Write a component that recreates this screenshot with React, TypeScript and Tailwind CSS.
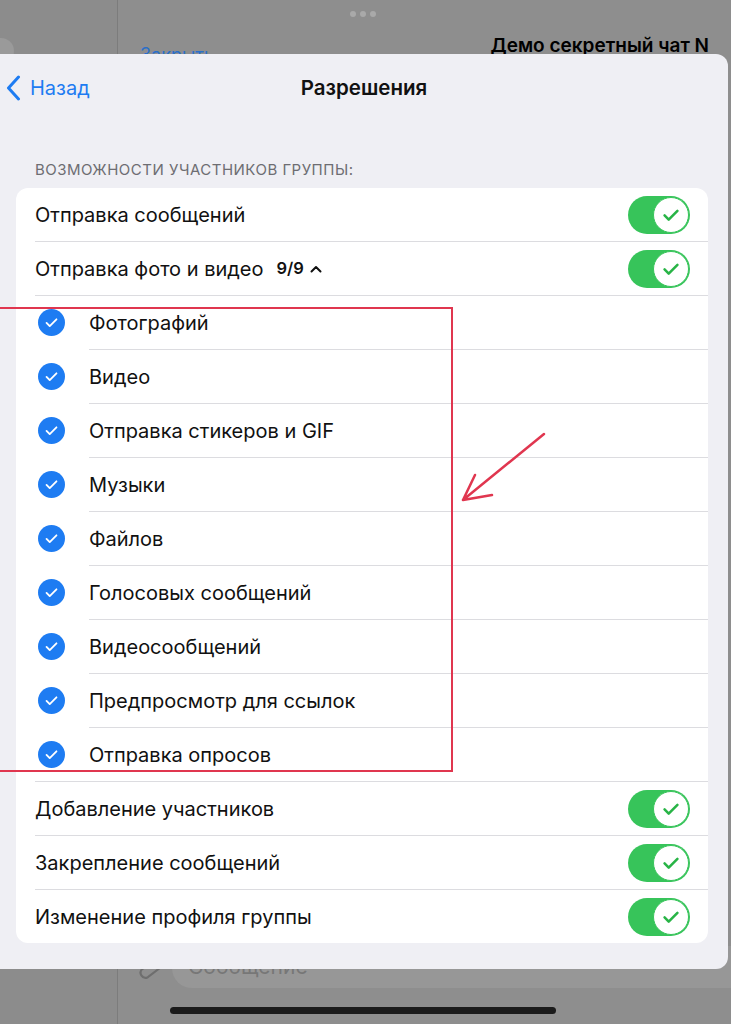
import React from "react";

const font = { fontFamily: "Inter, 'Noto Sans', sans-serif" };

const Check = ({ color, size, width }: { color: string; size: number; width: number }) => (
  <svg width={size} height={size} viewBox="0 0 24 24" fill="none">
    <path d="M5 12.5l4.5 4.5L19 7.5" stroke={color} strokeWidth={width} strokeLinecap="round" strokeLinejoin="round" />
  </svg>
);

const Toggle = () => (
  <div className="w-[62px] h-[38px] rounded-full bg-[#37c45a] flex items-center justify-end pr-[1px] shrink-0">
    <div className="w-[36px] h-[36px] rounded-full bg-white border-[1.5px] border-[#37c45a] flex items-center justify-center">
      <Check color="#28b446" size={22} width={2.8} />
    </div>
  </div>
);

const Sep = ({ inset }: { inset: number }) => (
  <div className={inset === 89 ? "ml-[73px] h-px bg-[#dcdce0]" : "ml-[19px] h-px bg-[#dcdce0]"} />
);

const MainRow = ({ label, extra }: { label: string; extra?: boolean }) => (
  <div className="h-[53px] flex items-center pl-[19px] pr-[18px]">
    <div className="flex-1 flex items-center text-[20px] text-[#111]">
      <span>{label}</span>
      {extra && (
        <span className="ml-[13px] flex items-center text-[16.5px] font-semibold text-[#111]">
          9/9
          <svg width="12" height="10" viewBox="0 0 12 10" className="ml-[6px]" fill="none">
            <path d="M1.5 7.5L6 3l4.5 4.5" stroke="#111" strokeWidth="2" strokeLinecap="round" strokeLinejoin="round" />
          </svg>
        </span>
      )}
    </div>
    <Toggle />
  </div>
);

const SubRow = ({ label }: { label: string }) => (
  <div className="h-[53px] flex items-center pl-[22px]">
    <div className="w-[27px] h-[27px] rounded-full bg-[#1e7cf2] flex items-center justify-center">
      <Check color="#fff" size={17} width={2.6} />
    </div>
    <span className="ml-[24px] text-[20px] text-[#111]">{label}</span>
  </div>
);

const subs = [
  "Фотографий",
  "Видео",
  "Отправка стикеров и GIF",
  "Музыки",
  "Файлов",
  "Голосовых сообщений",
  "Видеосообщений",
  "Предпросмотр для ссылок",
  "Отправка опросов",
];

export default function App() {
  return (
    <div className="relative w-[731px] h-[1024px] overflow-hidden bg-[#8e8e8e]" style={font}>
      {/* background app */}
      <div className="flex h-full">
        <div className="w-[118px] border-r border-[#7c7c7c] bg-[#8c8c8c] pt-[38px]">
          <div className="-ml-[12px] w-[26px] h-[26px] rounded-full bg-[#9a9a9a]" />
        </div>
        <div className="flex-1 flex flex-col">
          <div className="h-[54px] flex items-end justify-between pl-[22px] pr-[22px]">
            <span className="text-[18px] text-[#2a6fc9] leading-none translate-y-[10px]">Закрыть</span>
            <span className="text-[19px] font-semibold text-black leading-none translate-y-[1px]">Демо секретный чат N</span>
          </div>
          <div className="flex-1" />
          <div className="h-[80px] flex items-start pl-[16px]">
            <svg width="28" height="34" viewBox="0 0 28 34" fill="none" className="mt-[4px]">
              <path d="M20 10L9 22a5 5 0 007 7l11-12a8 8 0 00-11-11L5 18" stroke="#6e6e6e" strokeWidth="2.2" strokeLinecap="round" transform="rotate(10 14 17)" />
            </svg>
            <div className="ml-[10px] flex-1 h-[42px] mt-[2px] rounded-l-[20px] bg-[#979797] pl-[16px] pt-[10px] text-[21px] text-[#777] leading-none">
              Сообщение
            </div>
          </div>
        </div>
      </div>

      {/* system overlays */}
      <div className="absolute top-[11px] left-[350px] flex gap-[4px]">
        <div className="w-[6px] h-[6px] rounded-full bg-[#a9a9a9]" />
        <div className="w-[6px] h-[6px] rounded-full bg-[#a9a9a9]" />
        <div className="w-[6px] h-[6px] rounded-full bg-[#a9a9a9]" />
      </div>
      <div className="absolute top-[1007px] left-[170px] w-[386px] h-[7px] rounded-full bg-[#1b1b1b]" />

      {/* sheet */}
      <div className="absolute left-0 top-[54px] w-[728px] h-[915px] bg-[#efeff4] rounded-tr-[12px] rounded-br-[12px] flex flex-col">
        <div className="h-[68px] relative flex items-center">
          <div className="flex items-center pl-[6px] text-[#1e7cf2]">
            <svg width="15" height="26" viewBox="0 0 15 26" fill="none">
              <path d="M12.5 2L2.5 13l10 11" stroke="#1e7cf2" strokeWidth="3" strokeLinecap="round" strokeLinejoin="round" />
            </svg>
            <span className="ml-[9px] text-[20px]">Назад</span>
          </div>
          <div className="absolute inset-x-0 text-center text-[20.5px] font-semibold text-[#111]">Разрешения</div>
        </div>
        <div className="mt-[39px] pl-[35px] text-[15px] leading-[18px] text-[#6d6d72] tracking-[0.5px]">
          ВОЗМОЖНОСТИ УЧАСТНИКОВ ГРУППЫ:
        </div>
        <div className="mt-[9px] ml-[16px] w-[692px] bg-white rounded-[12px] overflow-hidden">
          <MainRow label="Отправка сообщений" />
          <Sep inset={35} />
          <MainRow label="Отправка фото и видео" extra />
          <Sep inset={35} />
          {subs.map((s, i) => (
            <React.Fragment key={s}>
              <SubRow label={s} />
              <Sep inset={i === subs.length - 1 ? 35 : 89} />
            </React.Fragment>
          ))}
          <MainRow label="Добавление участников" />
          <Sep inset={35} />
          <MainRow label="Закрепление сообщений" />
          <Sep inset={35} />
          <MainRow label="Изменение профиля группы" />
        </div>
      </div>

      {/* annotation */}
      <div className="absolute -left-[10px] top-[307px] w-[463px] h-[465px] border-2 border-[#e0364f]" />
      <svg className="absolute left-0 top-0" width="731" height="1024" fill="none">
        <path d="M544 434L463 500M463 500L475 475M463 500L492 495" stroke="#e0364f" strokeWidth="2.5" strokeLinecap="round" />
      </svg>
    </div>
  );
}
